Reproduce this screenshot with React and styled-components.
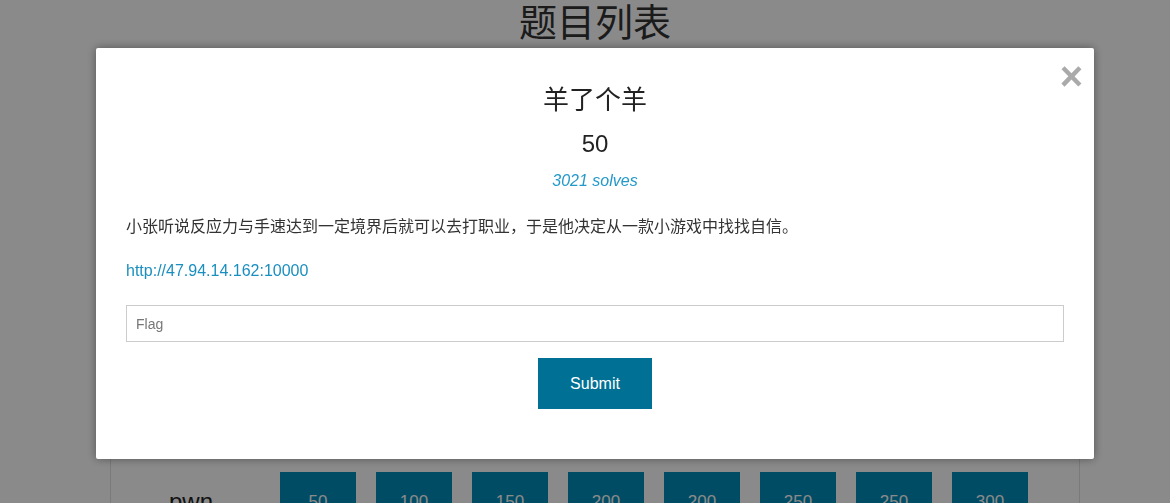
import React from 'react'
import styled, { createGlobalStyle } from 'styled-components'

const GlobalStyle = createGlobalStyle`
   html, body {
      margin: 0;
      padding: 0;
      overflow: hidden;
      background: #fff;
   }
   body {
      font-family: "Liberation Sans", "Noto Sans CJK SC", sans-serif;
      color: #222;
   }
   * {
      box-sizing: border-box;
   }
`

const categories = [
   { name: 'web', scores: [50, 100, 150, 200, 200, 250, 250, 300] },
   { name: 'misc', scores: [50, 100, 150, 200, 200, 250, 250, 300] },
   { name: 'crypto', scores: [50, 100, 150, 200, 200, 250, 250, 300] },
   { name: 'reverse', scores: [50, 100, 150, 200, 200, 250, 250, 300] },
   { name: 'mobile', scores: [50, 100, 150, 200, 200, 250, 250, 300] },
   { name: 'pwn', scores: [50, 100, 150, 200, 200, 250, 250, 300] }
]

const App = () => (
   <>
      <GlobalStyle />
      <Page>
         <Heading>题目列表</Heading>
         <Board>
            {categories.map(cat => (
               <CategoryRow key={cat.name}>
                  <CategoryName>{cat.name}</CategoryName>
                  <Challenges>
                     {cat.scores.map((s, i) => (
                        <ChallengeButton key={i}>{s}</ChallengeButton>
                     ))}
                  </Challenges>
               </CategoryRow>
            ))}
         </Board>
      </Page>
      <Overlay>
         <Modal>
            <Close>×</Close>
            <ChalName>羊了个羊</ChalName>
            <ChalValue>50</ChalValue>
            <Solves>3021 solves</Solves>
            <Description>小张听说反应力与手速达到一定境界后就可以去打职业，于是他决定从一款小游戏中找找自信。</Description>
            <ChalLink href="#">http://47.94.14.162:10000</ChalLink>
            <FlagInput placeholder="Flag" />
            <SubmitRow>
               <SubmitButton>Submit</SubmitButton>
            </SubmitRow>
         </Modal>
      </Overlay>
   </>
)

const Page = styled.div`
   padding-left: 20px;
   min-height: 503px;
`

const Heading = styled.h1`
   margin: 0;
   height: 48px;
   font-size: 38px;
   line-height: 46px;
   font-weight: normal;
   text-align: center;
   color: #333;
`

const Board = styled.div`
   width: 970px;
   margin: 0 auto;
   padding-top: 24px;
   border-left: 1px solid #e2e2e2;
   border-right: 1px solid #e2e2e2;
   min-height: 600px;
`

const CategoryRow = styled.div`
   display: grid;
   grid-template-columns: 160px 1fr;
   column-gap: 9px;
   align-items: center;
   margin-bottom: 20px;
`

const CategoryName = styled.div`
   font-size: 24px;
   text-align: center;
   color: #222;
`

const Challenges = styled.div`
   display: flex;
   gap: 20px;
`

const ChallengeButton = styled.button`
   width: 76px;
   height: 60px;
   border: none;
   padding: 0;
   background: #008cba;
   color: #fff;
   font-family: inherit;
   font-size: 17px;
`

const Overlay = styled.div`
   position: fixed;
   inset: 0;
   background: rgba(0, 0, 0, 0.46);
   display: flex;
   justify-content: center;
   align-items: flex-start;
   padding: 48px 0 0 20px;
`

const Modal = styled.div`
   position: relative;
   width: 998px;
   padding: 30px 30px 50px;
   background: #fff;
   border-radius: 2px;
   box-shadow: 0 0 10px rgba(0, 0, 0, 0.4);
   text-align: center;
`

const Close = styled.span`
   position: absolute;
   top: 8px;
   right: 11px;
   font-size: 40px;
   line-height: 1;
   font-weight: bold;
   color: #aaa;
   cursor: pointer;
`

const ChalName = styled.h3`
   margin: 0;
   font-size: 26px;
   line-height: 44px;
   font-weight: normal;
   color: #222;
`

const ChalValue = styled.h4`
   margin: 0;
   font-size: 24px;
   line-height: 44px;
   font-weight: normal;
   color: #222;
`

const Solves = styled.div`
   font-size: 16px;
   line-height: 30px;
   font-style: italic;
   color: #2399c9;
`

const Description = styled.p`
   margin: 16px 0 0;
   text-align: left;
   font-size: 16px;
   line-height: 30px;
   color: #333;
`

const ChalLink = styled.a`
   display: block;
   margin-top: 14px;
   text-align: left;
   font-size: 16px;
   line-height: 30px;
   color: #1a8fbf;
   text-decoration: none;
`

const FlagInput = styled.input`
   display: block;
   width: 100%;
   height: 37px;
   margin-top: 19px;
   padding: 0 9px;
   border: 1px solid #ccc;
   font-family: inherit;
   font-size: 14px;
   color: #222;
   outline: none;
   &::placeholder {
      color: #777;
   }
`

const SubmitRow = styled.div`
   display: flex;
   justify-content: center;
   margin-top: 16px;
`

const SubmitButton = styled.button`
   height: 51px;
   padding: 0 32px;
   border: none;
   background: #007095;
   color: #fff;
   font-family: inherit;
   font-size: 16px;
   cursor: pointer;
`

export default App
